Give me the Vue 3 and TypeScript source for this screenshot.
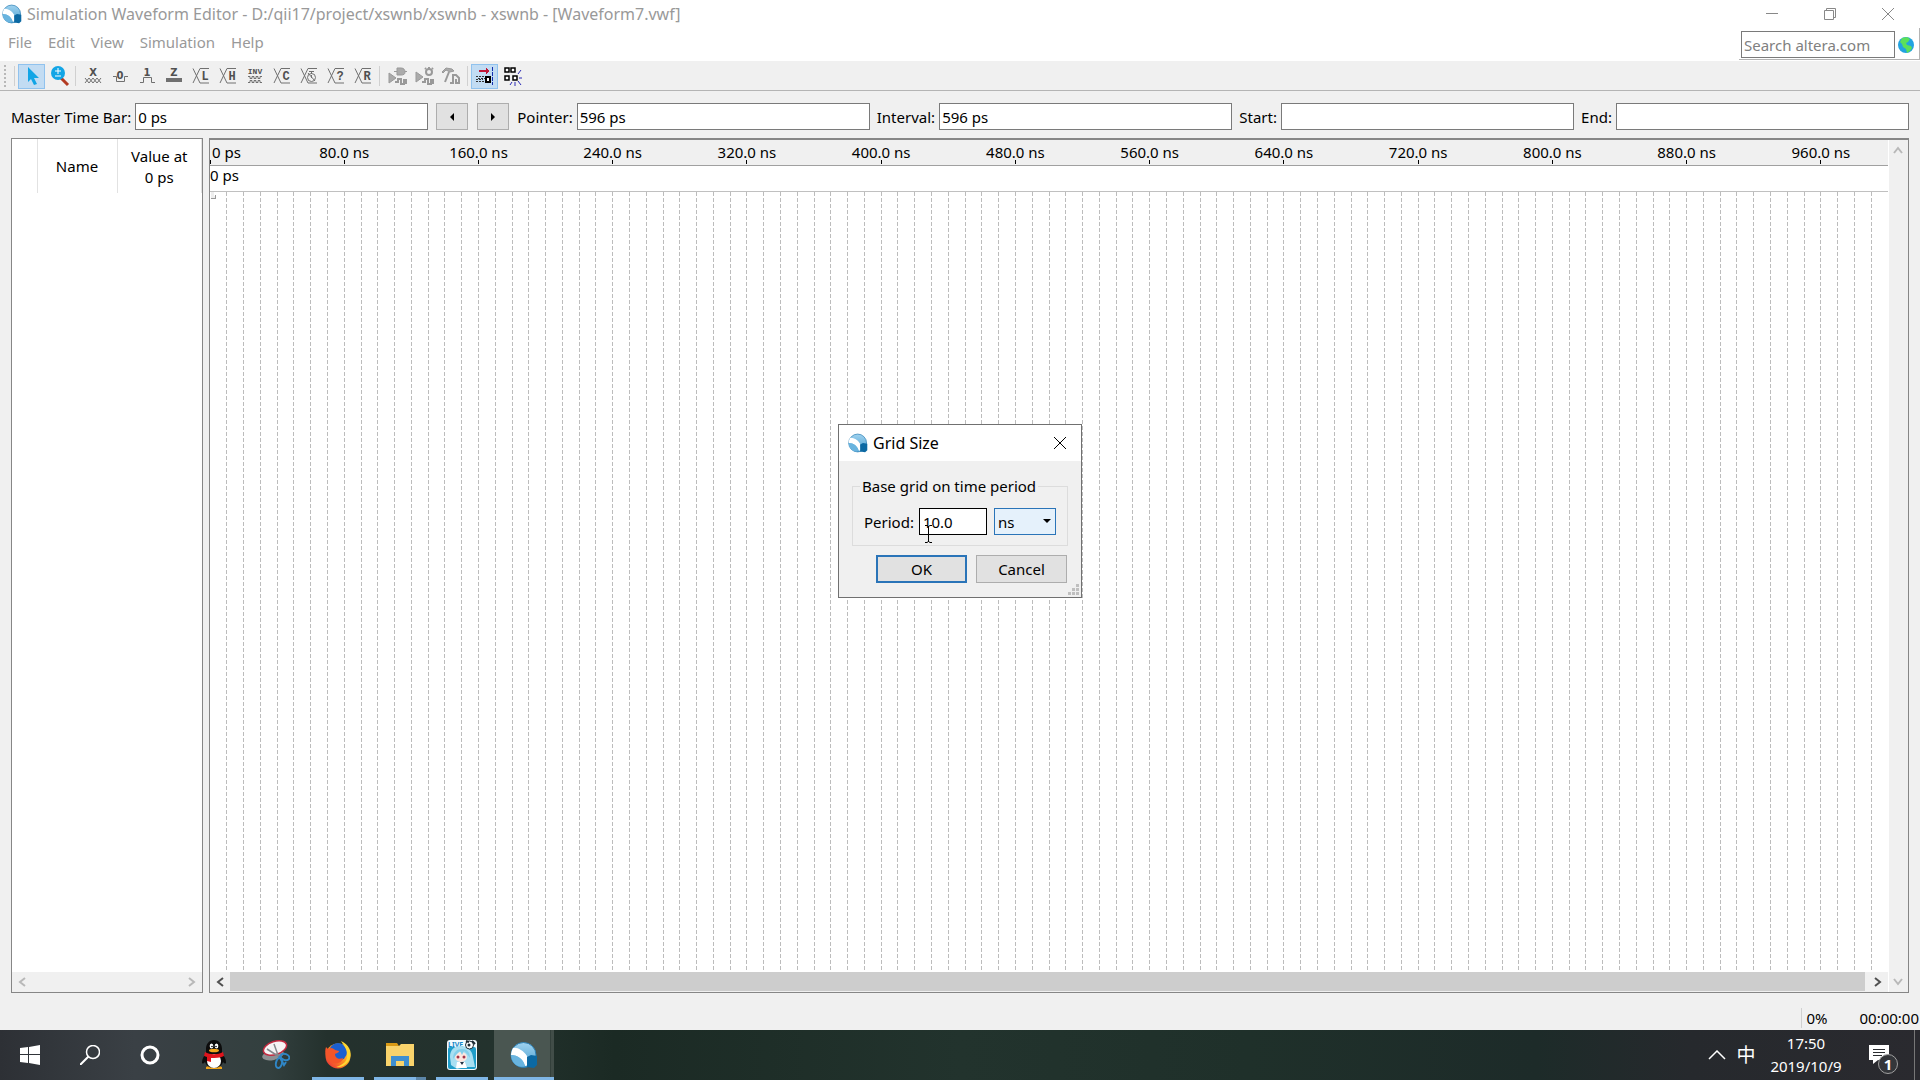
<script setup lang="ts">
import { ref } from 'vue'

const menus = ['File', 'Edit', 'View', 'Simulation', 'Help']

interface ValueTool { id: string; title: string; glyph?: string }
const valueTools: ValueTool[] = [
  { id: 'unknown', title: 'Forcing unknown', glyph: 'X' },
  { id: 'low', title: 'Forcing low', glyph: '0' },
  { id: 'high', title: 'Forcing high', glyph: '1' },
  { id: 'highz', title: 'High impedance', glyph: 'Z' },
  { id: 'bus', title: 'Weak low', glyph: 'L' },
  { id: 'bus', title: 'Weak high', glyph: 'H' },
  { id: 'invert', title: 'Invert', glyph: 'INV' },
  { id: 'bus', title: 'Count value', glyph: 'C' },
  { id: 'clock', title: 'Overwrite clock' },
  { id: 'bus', title: 'Arbitrary value', glyph: '?' },
  { id: 'bus', title: 'Random value', glyph: 'R' },
]

const masterTime = ref('0 ps')
const pointer = ref('596 ps')
const interval = ref('596 ps')
const start = ref('')
const end = ref('')
const search = ref('')
const period = ref('10.0')
const unit = ref('ns')

const gridLines = Array.from({ length: 99 }, (_, i) => i + 1)
const rulerMarks = Array.from({ length: 12 }, (_, i) => (i + 1) * 8)
</script>

<template>
  <div class="desktop">
    <svg class="defs" width="0" height="0" aria-hidden="true">
      <defs>
        <linearGradient id="orb" x1="0" y1="0" x2="0" y2="1">
          <stop offset="0" stop-color="#9fd2ef" /><stop offset="1" stop-color="#4a9fd0" />
        </linearGradient>
        <linearGradient id="fox" x1="1" y1="0" x2="0" y2="1">
          <stop offset="0" stop-color="#fff04a" /><stop offset=".45" stop-color="#ff9a1f" /><stop offset="1" stop-color="#e8203c" />
        </linearGradient>
        <symbol id="logo" viewBox="0 0 28 28">
          <circle cx="13.500" cy="14" r="12.500" fill="url(#orb)" stroke="#2b7fb4" />
          <path d="M3 7C7 6 13 9 17 15l2 9-4 1C13 18 8 14 1 14c0-3 1-5 2-7z" fill="#fff" />
          <path d="M1 14c7 0 12 4 14 11-7 3-14-3-14-11z" fill="#69b4df" />
          <path d="M17 16l4-2 6 1v9l-3 3-7-1z" fill="#0c69a3" />
        </symbol>
      </defs>
    </svg>

    <main class="window">
      <header class="titlebar">
        <svg class="logo" width="20" height="20"><use href="#logo" /></svg>
        <span class="title">Simulation Waveform Editor - D:/qii17/project/xswnb/xswnb - xswnb - [Waveform7.vwf]</span>
        <div class="window-controls">
          <button type="button" aria-label="Minimize"><svg width="14" height="14"><path d="M1 6.500h12" /></svg></button>
          <button type="button" aria-label="Restore"><svg width="14" height="14"><path d="M1.500 3.500h9v9h-9zM3.500 3v-1.500h9v9H11" /></svg></button>
          <button type="button" aria-label="Close"><svg width="14" height="14"><path d="M1 1l12 12M13 1L1 13" /></svg></button>
        </div>
      </header>

      <div class="menubar">
        <nav class="menus">
          <button v-for="m in menus" :key="m" type="button">{{ m }}</button>
        </nav>
        <div class="search">
          <input v-model="search" type="text" placeholder="Search altera.com" aria-label="Search altera.com" />
          <svg width="18" height="18" viewBox="0 0 18 18">
            <circle cx="9" cy="9" r="8" fill="#22a3e0" />
            <path d="M5 2l5-1 3 2-2 3-2 1 1 2 4 1 1 2-2 3-3 2-1-4-3-2-1-3-2-2z" fill="#5be05a" />
          </svg>
        </div>
      </div>

      <div class="toolbar">
        <span class="grip"></span>
        <span class="sep"></span>
        <button type="button" class="tool on" aria-label="Selection tool">
          <svg width="24" height="24"><path d="M8 3l11 11h-5l3 6-3 1-3-6-3 3z" fill="#12a5e6" /></svg>
        </button>
        <button type="button" class="tool" aria-label="Zoom tool">
          <svg width="24" height="24">
            <path d="M14 14l7 7" stroke="#b33a22" stroke-width="3" />
            <circle cx="11" cy="9" r="7" fill="#12a5e6" />
            <path d="M8 7h6M11 4v6M8 12h6" stroke="#fff" />
          </svg>
        </button>
        <span class="sep"></span>
        <button v-for="t in valueTools" :key="t.title" type="button" class="tool" :aria-label="t.title">
          <svg width="24" height="24" class="wave">
            <template v-if="t.id === 'unknown'">
              <path d="M4 14l4 5 4-5 4 5 4-5M4 19l4-5 4 5 4-5 4 5" />
              <text x="12" y="12" class="cap">{{ t.glyph }}</text>
            </template>
            <template v-else-if="t.id === 'low'">
              <path d="M5 12.500h3.500v5h8v-5H20" /><text x="12" y="15" class="cap">{{ t.glyph }}</text>
            </template>
            <template v-else-if="t.id === 'high'">
              <path d="M5 18.500h3.500v-5h8v5H20" /><text x="12" y="12" class="cap">{{ t.glyph }}</text>
            </template>
            <template v-else-if="t.id === 'highz'">
              <rect x="4" y="14" width="16" height="4" class="solid" /><text x="12" y="12" class="cap">{{ t.glyph }}</text>
            </template>
            <template v-else-if="t.id === 'invert'">
              <path d="M5 12.500h2v2h2v-2h2v2h2v-2h2v2h2v-2h2M5 18.500h2v-2h2v2h2v-2h2v2h2v-2h2v2h2" />
              <text x="12" y="10" class="small">{{ t.glyph }}</text>
            </template>
            <template v-else>
              <path d="M4 4.500l7 14.500M4 19L11 4.500h9M11 19h9" />
              <text v-if="t.glyph" x="16" y="16" class="serif">{{ t.glyph }}</text>
              <template v-else>
                <circle cx="14.500" cy="13.500" r="4" /><path d="M14.500 7v3M12 7.500h5M14.500 14v-3M11 9l7 8" />
              </template>
            </template>
          </svg>
        </button>
        <span class="sep"></span>
        <button type="button" class="tool" aria-label="Run functional simulation">
          <svg width="24" height="24" class="dim">
            <path d="M4 9l7 5-7 5z" class="solid" /><path d="M9 7.500h3M12 4h4c3 0 4 2 4 4s-1 3-4 3h-4zM20 7.500h2" class="solid" />
            <path d="M10 18h3v-3h3v5h3v-4h2v4" />
          </svg>
        </button>
        <button type="button" class="tool" aria-label="Run timing simulation">
          <svg width="24" height="24" class="dim">
            <path d="M4 8l7 5-7 5z" class="solid" /><circle cx="17" cy="8" r="3" /><path d="M17 3v3M13 4l1 1M21 4l-1 1M10 18h3v-3h3v5h3v-4h2v4" />
          </svg>
        </button>
        <button type="button" class="tool" aria-label="Generate testbench">
          <svg width="24" height="24" class="dim">
            <path d="M3 8l4-4 6 1 2 2-4 1-4-2-3 3z" class="solid" /><path d="M10 8l-4 10" /><path d="M11 19h3v-8h3l3 3v5h-3v-4" />
          </svg>
        </button>
        <span class="sep"></span>
        <button type="button" class="tool on" aria-label="Snap to grid">
          <svg width="24" height="24" shape-rendering="crispEdges">
            <path d="M6 6h7V4l4 3-4 3V8H6z" fill="#c01838" />
            <path d="M3 12.500h9M3 17.500h9M5 14.500h7M3 15.500h7" stroke="#333" stroke-dasharray="2 1" />
            <path d="M12.500 12.500h4v5h-4z" fill="#fff" stroke="#000" stroke-width="2" />
            <path d="M19.500 3v18" stroke="#1530b0" stroke-dasharray="4 1" fill="none" />
          </svg>
        </button>
        <button type="button" class="tool" aria-label="Snap to transition">
          <svg width="24" height="24">
            <path d="M5 4h4v4H5zM11 4h4v4h-4zM5 12h4v4H5zM13 12h4v4h-4z" fill="#fff" stroke="#000" stroke-width="1.500" />
            <path d="M18 10l3-4M19 14h3M18 17l3 4M15 18v4M12 18l-2 3" stroke="#2a2ab4" />
          </svg>
        </button>
      </div>

      <form class="timebar" @submit.prevent>
        <label for="master">Master Time Bar:</label>
        <input id="master" v-model="masterTime" type="text" />
        <button type="button" aria-label="Previous transition"><svg width="6" height="10"><path d="M5 1v8L1 5z" /></svg></button>
        <button type="button" aria-label="Next transition"><svg width="6" height="10"><path d="M1 1v8l4-4z" /></svg></button>
        <label for="pointer">Pointer:</label>
        <input id="pointer" v-model="pointer" type="text" />
        <label for="interval">Interval:</label>
        <input id="interval" v-model="interval" type="text" />
        <label for="start">Start:</label>
        <input id="start" v-model="start" type="text" />
        <label for="end">End:</label>
        <input id="end" v-model="end" type="text" />
      </form>

      <div class="panels">
        <section class="nodes">
          <table>
            <thead><tr><th class="c-icon"></th><th class="c-name">Name</th><th class="c-value">Value at<br />0 ps</th></tr></thead>
          </table>
          <div class="hscroll off">
            <button type="button" aria-label="Scroll left"><svg width="10" height="12"><path d="M8 2L3 6l5 4" /></svg></button>
            <span class="track"></span>
            <button type="button" aria-label="Scroll right"><svg width="10" height="12"><path d="M2 2l5 4-5 4" /></svg></button>
          </div>
        </section>

        <section class="waves">
          <div class="canvas">
            <svg class="ruler" width="100%" height="26">
              <text x="2" y="18">0 ps</text>
              <path d="M.500 20v4" stroke="#000" />
              <g v-for="m in rulerMarks" :key="m">
                <text :x="m + '%'" y="18" text-anchor="middle">{{ m * 10 }}.0 ns</text>
                <line :x1="m + '%'" :x2="m + '%'" y1="20" y2="24" stroke="#000" shape-rendering="crispEdges" />
              </g>
            </svg>
            <div class="bar-row">0 ps</div>
            <div class="grid">
              <svg width="100%" height="100%" shape-rendering="crispEdges">
                <line v-for="i in gridLines" :key="i" :x1="i + '%'" :x2="i + '%'" y1="0" y2="100%" stroke="#bcbcbc" stroke-dasharray="4 2" />
                <path d="M1 0h3v4h2v3H1z" fill="#eee" /><path d="M1 6.500h4.500V3" fill="none" stroke="#999" />
              </svg>
            </div>
            <div class="hscroll">
              <button type="button" aria-label="Scroll left"><svg width="10" height="12"><path d="M8 2L3 6l5 4" /></svg></button>
              <span class="track thumb"></span>
              <button type="button" aria-label="Scroll right"><svg width="10" height="12"><path d="M2 2l5 4-5 4" /></svg></button>
            </div>
          </div>
          <div class="vscroll">
            <button type="button" aria-label="Scroll up"><svg width="12" height="10"><path d="M2 8l4-5 4 5" /></svg></button>
            <button type="button" aria-label="Scroll down"><svg width="12" height="10"><path d="M2 2l4 5 4-5" /></svg></button>
          </div>
        </section>
      </div>

      <footer class="statusbar">
        <span class="progress">0%</span>
        <span>00:00:00</span>
      </footer>

      <div class="dialog" role="dialog" aria-labelledby="dlg-title">
        <header>
          <svg width="20" height="20"><use href="#logo" /></svg>
          <span id="dlg-title" class="title">Grid Size</span>
          <button type="button" aria-label="Close"><svg width="14" height="14"><path d="M1 1l12 12M13 1L1 13" /></svg></button>
        </header>
        <fieldset>
          <legend>Base grid on time period</legend>
          <label for="period">Period:</label>
          <input id="period" v-model="period" type="text" />
          <div class="combo">
            <select v-model="unit" aria-label="Time unit"><option>ps</option><option>ns</option><option>us</option></select>
            <svg width="8" height="6"><path d="M0 1h8L4 5z" /></svg>
          </div>
        </fieldset>
        <div class="actions">
          <button type="button" class="primary">OK</button>
          <button type="button">Cancel</button>
        </div>
        <svg class="sizegrip" width="12" height="12"><path d="M8 0h3v3H8zM4 4h3v3H4zM8 4h3v3H8zM0 8h3v3H0zM4 8h3v3H4zM8 8h3v3H8z" fill="#bfbfbf" /></svg>
        <svg class="ibeam" width="9" height="18"><path d="M1 .500h2l1.500 1L6 .500h2M4.500 1v16M1 17.500h2l1.500-1 1.500 1h2" fill="none" stroke="#000" /></svg>
      </div>
    </main>

    <nav class="taskbar">
      <div class="system">
        <button type="button" aria-label="Start"><svg width="20" height="20" fill="#fff"><path d="M0 3l8-1v7H0zM9 2l11-2v9H9zM0 10h8v8l-8-1zM9 10h11v10L9 18z" /></svg></button>
        <button type="button" aria-label="Search"><svg width="20" height="20" fill="none" stroke="#fff"><circle cx="13" cy="7" r="6.500" stroke-width="1.500" /><path d="M8.500 11.500L0 20" stroke-width="2" /></svg></button>
        <button type="button" aria-label="Cortana"><svg width="20" height="20" fill="none" stroke="#fff"><circle cx="10" cy="10" r="8" stroke-width="3" /></svg></button>
      </div>
      <div class="apps">
        <button type="button" aria-label="QQ">
          <svg width="26" height="30" viewBox="0 0 26 30">
            <path d="M5 27l5-2 3 1 3-1 5 2v2H5z" fill="#f2a51c" />
            <path d="M13 0c5 0 8 4 8 9v4c2 3 4 6 4 9 0 2-1 2-3 0-1 3-4 6-9 6s-8-3-9-6c-2 2-3 2-3 0 0-3 2-6 4-9V9c0-5 3-9 8-9z" fill="#0c0c0c" />
            <ellipse cx="13" cy="21" rx="7" ry="7" fill="#fff" />
            <ellipse cx="10.500" cy="6" rx="1.800" ry="2.600" fill="#fff" /><ellipse cx="15.500" cy="6" rx="1.800" ry="2.600" fill="#fff" />
            <circle cx="11" cy="6.500" r=".8" /><circle cx="15" cy="6.500" r=".8" />
            <ellipse cx="13" cy="10.500" rx="5" ry="1.800" fill="#f2a51c" />
            <path d="M4 12c5 3 13 3 18 0l1 4c-4 2-9 2-13 2v4l-4-1v-4l-3-1z" fill="#e0141c" />
          </svg>
        </button>
        <button type="button" aria-label="Snipping Tool">
          <svg width="28" height="30" viewBox="0 0 28 30">
            <ellipse cx="11" cy="15" rx="11" ry="5" fill="#8d8f92" transform="rotate(-12 11 15)" />
            <ellipse cx="13" cy="8" rx="12" ry="6.500" fill="#f6f3f4" stroke="#c22a40" stroke-width="1.500" transform="rotate(-18 13 8)" />
            <path d="M12 4l5 14M5 9l14 9" stroke="#85888c" stroke-width="1.500" />
            <g fill="none" stroke="#2f86c6" stroke-width="2"><ellipse cx="23" cy="17" rx="4.500" ry="3" transform="rotate(20 23 17)" /><ellipse cx="17" cy="23" rx="3" ry="5" transform="rotate(15 17 23)" /><path d="M17 16l5 9 2-3" /></g>
          </svg>
        </button>
        <button type="button" class="running" aria-label="Firefox">
          <svg width="28" height="28" viewBox="0 0 28 28">
            <circle cx="14" cy="15" r="12.500" fill="url(#fox)" />
            <circle cx="14" cy="11" r="9" fill="#1b5fd0" />
            <path d="M17 0c8 4 11 10 9 17-2 6-8 10-14 9 7-2 12-6 11-13 0-5-3-8-6-13z" fill="#ffd532" />
            <path d="M2 6l2 2 3-1c2 0 3 1 4 2l4 1c0 2-3 2-4 3 0 4 4 6 8 4-1 5-7 7-12 4C2 18 0 12 2 6z" fill="#f4552a" />
          </svg>
        </button>
        <button type="button" class="running stacked" aria-label="File Explorer">
          <svg width="28" height="26" viewBox="0 0 28 26">
            <path d="M0 1h11l2 3H0z" fill="#d99a16" /><path d="M0 4h13l2-2h13v22H0z" fill="#f9d36b" />
            <path d="M5 14h18v10h-5v-5h-8v5H5z" fill="#3f8fd0" />
          </svg>
        </button>
        <button type="button" class="running" aria-label="Live player">
          <svg width="30" height="30" viewBox="0 0 30 30">
            <rect width="30" height="30" rx="3" fill="#f4fbfe" /><rect x="1" y="7" width="28" height="22" rx="2" fill="#1f9dc9" />
            <text x="1" y="7" font-size="7" font-weight="bold" fill="#1689c9">LIVE</text>
            <path d="M3 17c0-8 5-11 11-11s11 4 12 11l2 10H18l-8 2-6-4z" fill="#a9dff2" />
            <ellipse cx="14" cy="17" rx="6" ry="5" fill="#fde6df" />
            <path d="M6 19c0-7 4-10 9-10s8 3 8 9l-3-4-3-3-2 4-2-4-4 4z" fill="#83cfea" />
            <circle cx="11" cy="17" r="1.500" fill="#a33448" /><circle cx="17" cy="17" r="1.500" fill="#a33448" />
            <path d="M10 22h8l2 6H9z" fill="#fff" /><path d="M13 22l2 3 2-3z" fill="#234" />
            <circle cx="22.500" cy="5" r="4" fill="#fff" stroke="#1c2a33" /><circle cx="22" cy="5" r="1.500" fill="#1c2a33" /><path d="M19 1l3 1M25 1l3 3" stroke="#1c2a33" stroke-width="2" />
          </svg>
        </button>
        <button type="button" class="running active" aria-label="Simulation Waveform Editor">
          <svg width="30" height="28"><use href="#logo" /></svg>
        </button>
      </div>
      <div class="tray">
        <button type="button" class="chev" aria-label="Show hidden icons"><svg width="18" height="10" fill="none" stroke="#fff" stroke-width="1.500"><path d="M1 9l8-8 8 8" /></svg></button>
        <button type="button" class="ime">中</button>
        <div class="clock"><time>17:50</time><time>2019/10/9</time></div>
        <button type="button" class="notify" aria-label="1 new notification">
          <svg width="20" height="20"><path d="M0 0h20v15H9l-5 4v-4H0z" fill="#fff" /><path d="M4 4.500h12M4 7.500h12M4 10.500h9" stroke="#2a2c30" /></svg>
          <span class="badge">1</span>
        </button>
        <span class="peek"></span>
      </div>
    </nav>
  </div>
</template>

<style>
body { margin: 0; }
</style>

<style scoped>
* { box-sizing: border-box; }
.desktop {
  display: flex; flex-direction: column; min-height: 100vh;
  font: 15px/20px "Noto Sans", "Noto Sans CJK SC", sans-serif; color: #000; background: #f0f0f0;
}
.defs { position: absolute; }
button, input, select { font: inherit; color: inherit; margin: 0; padding: 0; border: 0; background: none; border-radius: 0; }
svg { display: block; flex: none; }
button { display: flex; align-items: center; justify-content: center; }
.window { position: relative; flex: 1; display: flex; flex-direction: column; }
.title { font-size: 16px; white-space: nowrap; }

.titlebar { display: flex; align-items: center; height: 28px; padding-left: 2px; gap: 5px; background: #fff; color: #999; }
.window-controls { display: flex; margin-left: auto; padding-right: 3px; }
.window-controls button { width: 58px; height: 28px; }
.window-controls path { fill: none; stroke: #888; }

.menubar { display: flex; justify-content: space-between; height: 34px; background: #fff; border-bottom: 1px solid #f0f0f0; color: #999; }
.menus { display: flex; height: 28px; padding-left: 8px; gap: 16px; }
.search { display: flex; align-items: center; gap: 2px; height: 32px; padding: 2px 4px 0 2px; border: 1px solid #b4b4b4; border-width: 0 1px 1px 0; }
.search input { width: 154px; height: 27px; padding: 0 2px; border: 1px solid #7a7a7a; background: #fff; }
.search input::placeholder { color: #808080; opacity: 1; }

.toolbar { display: flex; align-items: center; height: 29px; padding-left: 4px; border-bottom: 1px solid #b4b4b4; }
.grip { width: 2px; height: 22px; margin-right: 5px; background: repeating-linear-gradient(#b8b8b8 0 2px, transparent 2px 4px); }
.sep { width: 1px; height: 20px; margin: 0 3px; background: #d0d0d0; }
.tool { width: 27px; height: 25px; border: 1px solid transparent; }
.tool.on { background: #c2dcf3; border-color: #90c2ee; }
.wave { fill: none; stroke: #707070; }
.wave text { fill: #505050; stroke: none; text-anchor: middle; }
.wave .cap { font: bold 10px "DejaVu Sans", sans-serif; }
.wave .small { font: bold 8px "Liberation Mono", monospace; }
.wave .serif { font: bold 12px "Liberation Mono", monospace; }
.wave .solid { fill: #707070; stroke: none; }
.dim { fill: none; stroke: #999; stroke-width: 2; }
.dim .solid { fill: #aaa; stroke: #999; stroke-width: 1; }

.timebar { display: flex; align-items: center; gap: 7px; padding: 12px 11px 8px; }
.timebar input { flex: 1; min-width: 0; height: 27px; padding: 0 2px; border: 1px solid #7a7a7a; background: #fff; }
.timebar label { margin-right: -3px; }
.timebar button { width: 32px; height: 27px; margin: 0 1px; border: 1px solid #adadad; background: #e1e1e1; }

.panels { flex: 1; display: flex; gap: 6px; padding: 0 11px; }
.nodes { display: flex; flex-direction: column; justify-content: space-between; width: 192px; border: 1px solid #868686; background: #fff; }
.nodes table { width: 100%; border-collapse: collapse; table-layout: fixed; }
.nodes th { height: 54px; padding: 0; border-right: 1px solid #e2e2e2; font-weight: normal; line-height: 21px; }
.nodes .c-value { padding-top: 2px; }
.c-icon { width: 25px; }
.c-name { width: 80px; }
.hscroll { display: flex; height: 20px; background: #f0f0f0; }
.hscroll button { width: 20px; height: 20px; }
.hscroll path, .vscroll path { fill: none; stroke: #505050; stroke-width: 2; }
.hscroll.off path, .vscroll path { stroke: #b8b8b8; }
.track { flex: 1; }
.thumb { height: 19px; margin-right: 3px; background: #cdcdcd; }
.waves { flex: 1; display: flex; border: 1px solid #868686; border-top-width: 2px; background: #f0f0f0; }
.canvas { flex: 1; display: flex; flex-direction: column; min-width: 0; }
.ruler { border-bottom: 1px solid #a0a0a0; }
.bar-row { height: 26px; line-height: 18px; border-bottom: 1px solid #c0c0c0; background: #fff; }
.grid { flex: 1; position: relative; background: #fff; }
.grid > svg { position: absolute; inset: 0; }
.vscroll { display: flex; flex-direction: column; justify-content: space-between; width: 20px; padding-right: 1px; border-left: 1px solid #fff; }
.vscroll button { height: 20px; }

.statusbar { display: flex; justify-content: flex-end; align-items: flex-end; gap: 32px; height: 37px; padding: 0 1px 2px 0; }
.progress { padding: 0 0 0 4px; border-left: 1px solid #d0d0d0; }

.dialog { position: absolute; left: 838px; top: 424px; width: 244px; border: 1px solid #707070; background: #f0f0f0; padding-bottom: 14px; }
.dialog header { display: flex; align-items: center; gap: 5px; height: 36px; padding-left: 9px; background: #fff; }
.dialog header button { width: 42px; height: 36px; margin-left: auto; }
.dialog header path { fill: none; stroke: #000; }
.dialog fieldset { display: flex; align-items: center; margin: 15px 13px 9px; padding: 12px 11px 10px; border: 1px solid #dcdcdc; gap: 6px; }
.dialog legend { padding: 0 2px; margin-left: -4px; }
.dialog fieldset label { margin-right: -1px; }
.dialog fieldset input { width: 68px; height: 27px; padding: 0 3px; border: 1px solid #000; background: #fff; }
.combo { position: relative; flex: none; margin-left: 1px; }
.combo select { appearance: none; display: block; width: 62px; height: 27px; padding: 0 3px; border: 1px solid #2a74b8; background: #e5f1fb; }
.combo svg { position: absolute; right: 5px; top: 10px; }
.actions { display: flex; justify-content: flex-end; gap: 9px; padding: 0 14px; }
.actions button { width: 91px; height: 28px; border: 1px solid #adadad; background: #e1e1e1; }
.actions .primary { border: 2px solid #2a74b8; }
.sizegrip { position: absolute; right: 1px; bottom: 1px; }
.ibeam { position: absolute; left: 85px; top: 100px; }

.taskbar { display: flex; height: 50px; color: #fff; background: linear-gradient(90deg, #2d3035 0, #3a4045 7%, #33403f 14%, #24312d 17%, #23322d 26%, #1b2a24 32%, #22332d 50%, #1f302a 65%, #1d2b29 80%, #26292d 88%, #2a2a2f 100%); }
.system, .apps { display: flex; }
.system { margin-right: 3px; }
.system button { width: 60px; }
.apps button { width: 62px; border: solid transparent; border-width: 3px 5px; }
.apps .running { width: 52px; margin: 0 5px; border-width: 3px 0; border-bottom-color: #7fb6e6; }
.apps .stacked { border-image: linear-gradient(90deg, #7fb6e6 78%, #5c86a8 78%) 3; border-image-width: 0 0 3px; }
.apps .active { width: 60px; margin: 0 1px; border-top-width: 0; padding-top: 3px; background: linear-gradient(90deg, #4a5651 56px, #33403b 56px 57px, #414d48 57px); }
.tray { display: flex; align-items: center; margin-left: auto; }
.chev { width: 30px; }
.ime { width: 28px; font-size: 19px; }
.clock { display: flex; flex-direction: column; width: 92px; text-align: center; line-height: 23px; }
.notify { position: relative; width: 62px; height: 50px; padding-right: 8px; }
.badge { position: absolute; left: 26px; top: 24px; width: 20px; height: 20px; border: 1px solid #a0a0a0; border-radius: 50%; background: #34363a; line-height: 18px; font-weight: bold; }
.peek { width: 6px; height: 50px; border-left: 1px solid #777; }
</style>
